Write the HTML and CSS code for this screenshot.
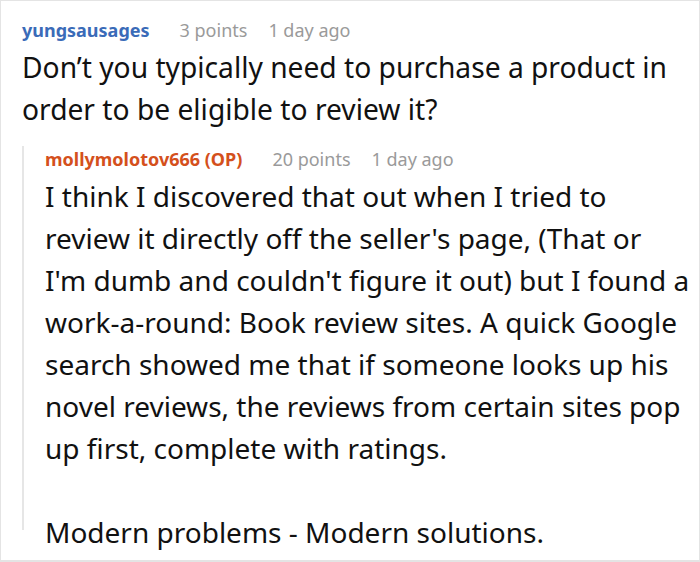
FILE: index.html
```html
<!DOCTYPE html>
<html>
<head>
<meta charset="utf-8">
<link rel="stylesheet" href="styles.css">
</head>
<body>
<div class="page">
  <div class="comment">
    <div class="meta">
      <span class="user">yungsausages</span>
      <span class="info">3 points</span>
      <span class="info">1 day ago</span>
    </div>
    <p class="body">Don’t you typically need to purchase a product in order to be eligible to review it?</p>
    <div class="reply">
      <div class="meta reply-meta">
        <span class="user op">mollymolotov666 (OP)</span>
        <span class="info">20 points</span>
        <span class="info">1 day ago</span>
      </div>
      <p class="body reply-body">I think I discovered that out when I tried to<br>review it directly off the seller's page, (That or<br>I'm dumb and couldn't figure it out) but I found a<br>work-a-round: Book review sites. A quick Google<br>search showed me that if someone looks up his<br>novel reviews, the reviews from certain sites pop<br>up first, complete with ratings.</p>
      <p class="body reply-body2">Modern problems - Modern solutions.</p>
    </div>
  </div>
</div>
</body>
</html>
```

FILE: styles.css
```css
html, body {
  margin: 0;
  padding: 0;
  background: #ffffff;
}

.page {
  box-sizing: border-box;
  width: 700px;
  height: 562px;
  border: 1px solid #e4e4e4;
  border-bottom-width: 2px;
  padding: 15px 0 0 21px;
  overflow: hidden;
  font-family: "Noto Sans", "Open Sans", sans-serif;
  color: #111111;
}

.meta {
  display: flex;
  font-size: 18px;
  line-height: 28px;
  white-space: nowrap;
}

.user {
  font-weight: 700;
  color: #3a6bb8;
  margin-right: 30px;
}

.user.op {
  color: #d4501c;
}

.info {
  color: #9a9a9a;
  margin-right: 21px;
}

.body {
  margin: 2px 0 0 0;
  font-size: 28.2px;
  line-height: 42px;
  width: 668px;
}

.reply {
  margin-top: 27px;
  border-left: 2px solid #e6e6e6;
  padding-left: 21px;
  height: 384px;
}

.reply-meta {
  margin-top: -11px;
  line-height: 26px;
}

.reply-body {
  margin-top: 3px;
  width: 650px;
  font-size: 28px;
  white-space: nowrap;
}

.reply-body2 {
  margin-top: 42px;
  font-size: 28px;
}
```
